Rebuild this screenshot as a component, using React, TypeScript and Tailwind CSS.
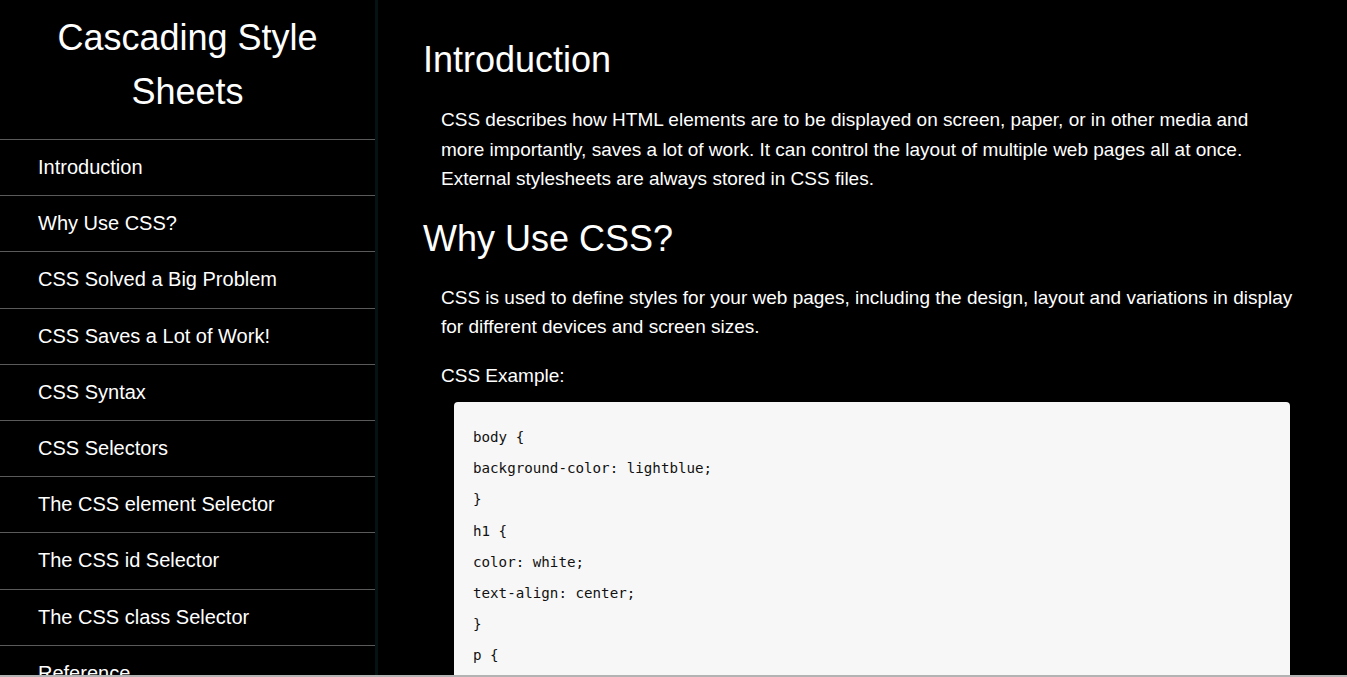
import React from "react";

const nav = [
  "Introduction",
  "Why Use CSS?",
  "CSS Solved a Big Problem",
  "CSS Saves a Lot of Work!",
  "CSS Syntax",
  "CSS Selectors",
  "The CSS element Selector",
  "The CSS id Selector",
  "The CSS class Selector",
  "Reference",
];

const code = [
  "body {",
  "background-color: lightblue;",
  "}",
  "h1 {",
  "color: white;",
  "text-align: center;",
  "}",
  "p {",
  "font-family: verdana;",
  "font-size: 20px;",
  "}",
];

export default function App() {
  return (
    <div
      className="w-[1347px] h-[677px] overflow-hidden flex flex-col bg-black text-white"
      style={{ fontFamily: '"Liberation Sans", Arial, sans-serif' }}
    >
      <div className="flex flex-1 min-h-0">
        <nav className="w-[378px] shrink-0 border-r-[3px] border-[#041212] flex flex-col">
          <div className="pt-[11px] pb-[20px] px-4 text-center text-[36px] leading-[54px]">
            Cascading Style
            <br />
            Sheets
          </div>
          {nav.map((n) => (
            <div
              key={n}
              className="border-t border-[#5a5a5a] h-[56.2px] shrink-0 flex items-center pl-[38px] pb-[1px] text-[20px] leading-[24px]"
            >
              {n}
            </div>
          ))}
        </nav>
        <main className="flex-1 min-w-0 pl-[45px] pr-[49px] pt-[40px]">
          <h1 className="text-[36px] leading-[40px]">Introduction</h1>
          <p className="mt-[25px] ml-[18px] text-[19px] leading-[29.5px]">
            CSS describes how HTML elements are to be displayed on screen, paper, or in other media and
            <br />
            more importantly, saves a lot of work. It can control the layout of multiple web pages all at once.
            <br />
            External stylesheets are always stored in CSS files.
          </p>
          <h1 className="mt-[25px] text-[36px] leading-[40px]">Why Use CSS?</h1>
          <p className="mt-[24px] ml-[18px] text-[19px] leading-[29.5px]">
            CSS is used to define styles for your web pages, including the design, layout and variations in display
            <br />
            for different devices and screen sizes.
          </p>
          <p className="mt-[19px] ml-[18px] text-[19px] leading-[29.5px]">CSS Example:</p>
          <div className="ml-[31px] mr-[8px] mt-[12px] bg-[#f7f7f7] rounded-[4px] pt-[20px] pl-[19px] text-[#111]">
            {code.map((c, i) => (
              <div
                key={i}
                className="text-[14.2px] leading-[31.2px] whitespace-pre"
                style={{ fontFamily: '"DejaVu Sans Mono", "Liberation Mono", monospace' }}
              >
                {c}
              </div>
            ))}
          </div>
        </main>
      </div>
      <div className="h-[2px] shrink-0 bg-[#b3b3b3]" />
    </div>
  );
}
